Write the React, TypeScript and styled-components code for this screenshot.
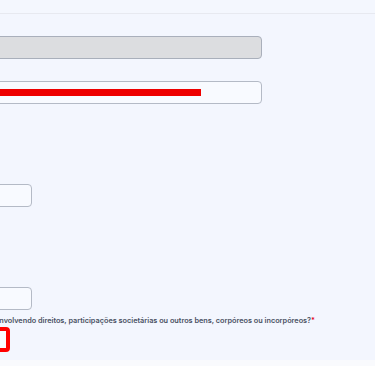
import React from 'react';
import styled, { createGlobalStyle } from 'styled-components';

const GlobalStyle = createGlobalStyle`
    html, body {
        margin: 0;
        padding: 0;
        background: #f3f6fe;
        font-family: Inter, 'Noto Sans', sans-serif;
    }
`;

const Page = styled.div`
    width: 375px;
    height: 366px;
    overflow: hidden;
    display: flex;
    flex-direction: column;
    background: #f3f6fe;
`;

const TopBar = styled.div`
    height: 13px;
    flex-shrink: 0;
    background: #f4f7fe;
    border-bottom: 1px solid #e7e9f0;
`;

const Content = styled.div`
    height: 346px;
    flex-shrink: 0;
    overflow: hidden;
`;

const Form = styled.div`
    margin-left: -240px;
    width: 502px;
    padding-top: 22px;
    display: flex;
    flex-direction: column;
`;

const Input = styled.div<{ $disabled?: boolean; $width?: number; $gap?: number }>`
    box-sizing: border-box;
    width: ${({ $width }) => ($width ? `${$width}px` : '100%')};
    height: 23px;
    margin-top: ${({ $gap }) => $gap ?? 0}px;
    border: 1px solid ${({ $disabled }) => ($disabled ? '#a9afbb' : '#b4bac6')};
    border-radius: 4px;
    background: ${({ $disabled }) => ($disabled ? '#dcdde0' : '#f8faff')};
    display: flex;
    align-items: center;
`;

const Redaction = styled.span<{ $width: number }>`
    display: block;
    width: ${({ $width }) => $width}px;
    height: 7px;
    background: #ee0000;
`;

const QuestionRow = styled.div`
    width: 555px;
    margin-top: 6px;
    display: flex;
    justify-content: flex-end;
    white-space: nowrap;
`;

const Question = styled.span`
    font-size: 7.3px;
    line-height: 10px;
    font-weight: 600;
    color: #4a5163;
`;

const Required = styled.span`
    color: #e4002b;
`;

const ErrorChoice = styled.div`
    box-sizing: border-box;
    width: 30px;
    height: 25px;
    margin-top: 1px;
    margin-left: 220px;
    border: 4px solid #ff0000;
    border-radius: 4px;
    background: #fafbff;
`;

const Footer = styled.div`
    flex: 1;
    background: #f9fafd;
`;

export default function App() {
    return (
        <>
            <GlobalStyle />
            <Page>
                <TopBar />
                <Content>
                    <Form>
                        <Input $disabled />
                        <Input $gap={22}>
                            <Redaction $width={440} />
                        </Input>
                        <Input $width={272} $gap={80} />
                        <Input $width={272} $gap={80} />
                        <QuestionRow>
                            <Question>
                                Houve alguma operação envolvendo direitos, participações societárias ou outros bens, corpóreos ou incorpóreos?
                                <Required>*</Required>
                            </Question>
                        </QuestionRow>
                        <ErrorChoice />
                    </Form>
                </Content>
                <Footer />
            </Page>
        </>
    );
}
